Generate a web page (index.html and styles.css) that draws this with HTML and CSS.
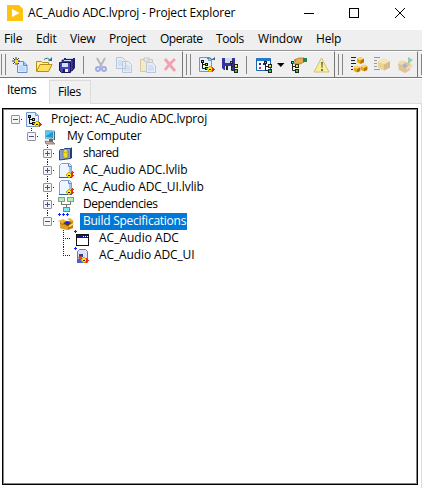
FILE: index.html
```html
<!DOCTYPE html>
<html lang="en">
<head>
<meta charset="utf-8">
<title>AC_Audio ADC.lvproj - Project Explorer</title>
<link rel="stylesheet" href="styles.css">
</head>
<body>
<svg class="defs" aria-hidden="true">
  <defs>
    <symbol id="branch" viewBox="0 0 8 12">
      <path d="M1.500 2V9.500H5M1.500 5.500H5" stroke="#222" fill="none"/>
      <path d="M0 0h3v3H0z" fill="#222"/><path d="M1 1h1v1H1z" fill="#2ee"/>
      <path d="M4 3h4v4H4zM4 8h4v4H4z" fill="#222"/>
      <path d="M5 4h2v2H5z" fill="#ee2"/><path d="M5 9h2v2H5z" fill="#3c4"/>
    </symbol>
    <symbol id="key" viewBox="0 0 8 8">
      <path d="M2 1h2v1h1v1h1v2H5v1H4v1H2V6H1V5H0V3h1V2h1z" fill="#c9a600"/>
      <path d="M2 2h2v1h1v2H4v1H2V5H1V3h1z" fill="#ffee00"/>
      <path d="M2 4h2v1H2z" fill="#222"/><path d="M5 2h1v1h1v1h1v1H7v1H6v1H5z" fill="#e52a18"/>
    </symbol>
    <symbol id="project" viewBox="0 0 16 16">
      <path d="M.5 .5h9l3 3v11h-12z" fill="#e3eeff" stroke="#7896c5"/>
      <path d="M9.500 .5v3h3" fill="#b8d0f2" stroke="#7896c5"/>
      <path d="M2 3h3v3H2zM6 6h3v3H6zM6 10h3v3H6z" fill="#111"/>
      <path d="M3.500 5v6.500H7M3.500 7.500H7" stroke="#111" fill="none"/>
      <path d="M3 4h1v1H3z" fill="#0ee"/><path d="M7 7h1v1H7z" fill="#ee0"/><path d="M7 11h1v1H7z" fill="#2d4"/>
      <use href="#key" x="8" y="8" width="8" height="8"/>
    </symbol>
    <symbol id="library" viewBox="0 0 16 16">
      <path d="M1.500 2.500l2-2h8l2 2v12h-12z" fill="#edf5ff" stroke="#7f9fd3"/>
      <path d="M1 14.500h13" stroke="#315b9e"/><path d="M11 3h2v11h-2z" fill="#a7c5ec"/><path d="M10.500 .5v3h3" fill="#c5daf4" stroke="#6288c5"/>
      <use href="#key" x="8" y="8" width="8" height="8"/><path d="M14 8h1v1h1v1h-1v1h-1v1h-1v-3h1z" fill="#e33122"/>
    </symbol>
    <symbol id="box" viewBox="0 0 8 8">
      <path d="M0 2l4-2 4 2v4L4 8 0 6z" fill="#e8a817"/><path d="M0 2l4-2 4 2-4 2z" fill="#ffd667"/>
      <path d="M4 4l4-2v4L4 8z" fill="#b77600"/>
    </symbol>
  </defs>
</svg>
<div class="window">
  <header class="titlebar">
    <svg class="logo" viewBox="0 0 16 16"><path d="M0 0h12l4 4v12H0z" fill="#ffc20e"/><path d="M5 4l7.500 4L5 12z" fill="#fff"/></svg>
    <span class="title">AC_Audio ADC.lvproj - Project Explorer</span>
    <svg class="controls" viewBox="0 0 102 12" shape-rendering="crispEdges">
      <path d="M0 6.500h10M45.500 1.500h9v9h-9z" stroke="#000" fill="none"/>
      <path d="M91 1l10 10M101 1L91 11" stroke="#000" shape-rendering="auto" fill="none"/>
    </svg>
  </header>
  <nav class="menu">
    <span class="m-file">File</span><span class="m-edit">Edit</span><span class="m-view">View</span><span class="m-project">Project</span><span class="m-operate">Operate</span><span class="m-tools">Tools</span><span class="m-window">Window</span><span class="m-help">Help</span>
  </nav>
  <div class="toolbar">
    <div class="group g-file">
      <i class="grip"></i>
      <svg class="ic" viewBox="0 0 16 16"><path d="M5.500 4.500h6l3.500 3.500v7.500H5.500z" fill="#d9e9ff" stroke="#6d8fc9"/><path d="M11.500 4.500v4H15" fill="#a9c7f1" stroke="#6d8fc9"/><path d="M7 9h4M7 11h6M7 13h6" stroke="#a9c7f1"/><path d="M4 0v8M0 4h8M1 1l6 6M7 1L1 7" stroke="#222" stroke-width=".9"/><path d="M3 3h3v3H3z" fill="#ffe800"/></svg>
      <svg class="ic open" viewBox="0 0 17 16"><path d="M.5 14V4.500h5l1 1h6V8" fill="#fff2a0" stroke="#b88d15"/><path d="M.5 14.500L4 7.500h12L12.500 14.500z" fill="#ffe05a" stroke="#b88d15"/><path d="M8 2.500q4-3 6 1" fill="none" stroke="#28738d"/><path d="M12 4h4V0z" fill="#28738d"/></svg>
      <svg class="ic save" viewBox="0 0 16 16"><path d="M5 1h11v10l-2 2H5z" fill="#242275"/><path d="M7 1h7v1H7z" fill="#cad8ff"/><path d="M3 3h11v10l-1 1H3z" fill="#4140a6" stroke="#171551" stroke-width=".8"/><path d="M5 3h7v1H5z" fill="#d3dcff"/><path d="M.5 5.500h11v10h-9l-2-2z" fill="#4742b5" stroke="#171551"/><path d="M3 6h6v4H3z" fill="#d3dcff"/><path d="M4 12h5v3H4z" fill="#eef"/><path d="M4 12h2v3H4z" fill="#222"/></svg>
      <i class="sep"></i>
      <svg class="ic cut faded" viewBox="0 0 12 16"><path d="M2 1l5 9M10 1L5 10" stroke="#666f7e" stroke-width="2"/><circle cx="3" cy="12" r="2" fill="none" stroke="#3456ce" stroke-width="2"/><circle cx="9" cy="12" r="2" fill="none" stroke="#3456ce" stroke-width="2"/></svg>
      <svg class="ic copy faded" viewBox="0 0 16 16"><path d="M.5 .5h6l3 3v8h-9zM6.500 4.500h6l3 3v8h-9z" fill="#deecff" stroke="#6b91d2"/><path d="M2 4h5M2 6h4M2 8h4M8 9h5M8 11h6M8 13h6" stroke="#86a7dc"/></svg>
      <svg class="ic paste faded" viewBox="0 0 16 16"><path d="M.5 2.500h12v12H.5z" fill="#ffe481" stroke="#b49139"/><path d="M4 1h5v3H4z" fill="#eee" stroke="#889"/><path d="M6.500 5.500h6l3 3v7h-9z" fill="#deecff" stroke="#6b91d2"/><path d="M8 9h5M8 11h6M8 13h6" stroke="#86a7dc"/></svg>
      <svg class="ic delete" viewBox="0 0 14 14"><path d="M2 1q5 6 10 12M12 1Q7 5 2 12" stroke="#f1a0ae" stroke-width="2.800" fill="none"/></svg>
    </div>
    <div class="group g-project">
      <i class="grip"></i>
      <svg class="ic p1" viewBox="0 0 16 16"><use href="#project" width="16" height="16"/><path d="M8 1.500q3-2 5 1" fill="none" stroke="#28738d"/><path d="M12 3h4V0z" fill="#28738d"/></svg>
      <svg class="ic p2" viewBox="0 0 16 16"><path d="M0 1h13v12H2l-2-2z" fill="#38339b"/><path d="M3 1h7v5H3z" fill="#cfdbf7"/><path d="M3 9h6v4H3z" fill="#eee"/><path d="M4 9h2v4H4z" fill="#222"/><use href="#branch" x="8" y="4" width="8" height="12"/></svg>
      <i class="sep"></i>
      <svg class="ic p3" viewBox="0 0 16 16"><path d="M.5 1.500h14v12H.5z" fill="#fff" stroke="#1764bd"/><path d="M1 1h13v3H1z" fill="#2478d0"/><path d="M3 6h2v2H3zM7 6h2v2H7z" fill="#238"/><path d="M3 10h2v2H3z" fill="#c33"/><use href="#branch" x="8" y="4" width="8" height="12"/></svg>
      <svg class="arrow" viewBox="0 0 8 4"><path d="M0 0h7.500L3.800 4z"/></svg>
      <svg class="ic p4" viewBox="0 0 16 16"><use href="#branch" x="0" y="4" width="8" height="12"/><path d="M3 3l5-2h5v4l-4 2-5 0-2-1 3-2z" fill="#e0b057" stroke="#a06c1c" stroke-width=".7"/><path d="M12 1h4v4h-4z" fill="#278447"/></svg>
      <svg class="ic p5 warning" viewBox="0 0 16 16"><path d="M7.500 1L15 15H0z" fill="#fff15a" stroke="#b6ac52"/><path d="M7 5h2l-.5 6H7.500zM7 12h2v2H7z" fill="#333"/></svg>
    </div>
    <div class="group g-build">
      <i class="grip"></i>
      <svg class="ic b1" viewBox="0 0 16 16"><path d="M0 .5h5M0 3.500h4M0 6.500h5M0 9.500h2M0 12.500h2" stroke="#222"/><use href="#box" x="6" y="0" width="7" height="7"/><use href="#box" x="2.500" y="8.500" width="7" height="7"/><use href="#box" x="9.500" y="7.500" width="7" height="7"/></svg>
      <svg class="ic b2 faded" viewBox="0 0 16 16"><path d="M0 .5h6M0 3.500h3M0 6.500h3M0 9.500h3M0 12.500h6" stroke="#222"/><use href="#box" x="4" y="1" width="12" height="13"/></svg>
      <svg class="ic b3 faded" viewBox="0 0 16 16"><path d="M1 7l6-3 7 3-1 6-5 3-6-3z" fill="#c98818"/><path d="M0 6l5-3 4 2-4 3zM9 10l5-3 2 2-6 4z" fill="#f1be56"/><path d="M5 8l3-1 3 2-3 2z" fill="#3c53d5"/><path d="M11 0l5 3-5 4z" fill="#22a539"/></svg>
    </div>
    <div class="group g-more"><i class="grip"></i></div>
  </div>
  <div class="tabs"><div class="tab active">Items</div><div class="tab">Files</div></div>
  <main class="panel">
    <div class="tree">
      <div class="row level-0"><i class="twist minus"></i><svg class="node" viewBox="0 0 16 16"><use href="#project" width="16" height="16"/></svg><span class="label l-project">Project: AC_Audio ADC.lvproj</span></div>
      <div class="row level-1"><i class="twist minus up"></i><svg class="node" viewBox="0 0 16 16"><path d="M3.500 1.500l9 .5v8.500l-9-1z" fill="#b3d2e3" stroke="#8fa5b5"/><path d="M4 2l7 1v6L4 8z" fill="#1e9bd8"/><path d="M4 2l6 1-6 4z" fill="#56cdf0"/><path d="M12 2l1 1v8h-1z" fill="#476579"/><path d="M7 10h4v3H7z" fill="#875c4c"/><path d="M3 12l8 1 2 2H4z" fill="#bbb" stroke="#735950" stroke-width=".7"/></svg><span class="label l-computer">My Computer</span></div>
      <div class="row level-2"><i class="twist plus full"></i><svg class="node" viewBox="0 0 16 16"><path d="M1.500 4.500l1-1h3l1-1h6v10l-11 1.500z" fill="#7f9fdc" stroke="#27457f"/><path d="M12 3l2-2v11l-2 1z" fill="#243e74"/><path d="M5 5v6c0 1.500 5 1.500 5 0V5z" fill="#f3db14" stroke="#817510" stroke-width=".7"/><ellipse cx="7.500" cy="5" rx="2.500" ry="1.200" fill="#fff47a" stroke="#817510" stroke-width=".6"/></svg><span class="label l-shared">shared</span></div>
      <div class="row level-2"><i class="twist plus full"></i><svg class="node" viewBox="0 0 16 16"><use href="#library" width="16" height="16"/></svg><span class="label l-lib">AC_Audio ADC.lvlib</span></div>
      <div class="row level-2"><i class="twist plus full"></i><svg class="node" viewBox="0 0 16 16"><use href="#library" width="16" height="16"/></svg><span class="label l-uilib">AC_Audio ADC_UI.lvlib</span></div>
      <div class="row level-2"><i class="twist plus full"></i><svg class="node" viewBox="0 0 16 16" shape-rendering="crispEdges"><path d="M3.500 4v3.500h9V4M8.500 8v3" stroke="#777" fill="none"/><path d="M.5 .5h6v4h-6zM9.500 .5h6v4h-6z" fill="#b6edb8" stroke="#8a9c8b"/><path d="M5.500 10.500h6v4h-6z" fill="#7eeaee" stroke="#5c8e91"/></svg><span class="label l-dependencies">Dependencies</span></div>
      <div class="row level-2 selected"><i class="twist minus up"></i><svg class="node" viewBox="0 0 16 16"><path d="M2 7h13v7l-5 2-8-2z" fill="#b97c0c"/><path d="M2 10l8 2v4l-8-2z" fill="#dea026"/><path d="M0 7l5-2 4 2-4 3zM9 5l3-1 4 3-2 1z" fill="#f0b535"/><path d="M10 12l5-3 1 1-4 3z" fill="#ffd67d"/><path d="M5 9l4-2 4 2-3 3z" fill="#5b3a05"/><path d="M8 8h1V7h1v1h1v1h-1v1H9V9H8z" fill="#1724ff"/><path d="M0 0h1v-1h1v1h1v1H2v1H1V1H0zM4 0h1v-1h1v1h1v1H6v1H5V1H4zM8 0h1v-1h1v1h1v1h-1v1H9V1H8z" fill="#1724ff"/></svg><span class="label l-build">Build Specifications</span></div>
      <div class="row level-3"><i class="twist full"></i><svg class="node" viewBox="0 0 16 16" shape-rendering="crispEdges"><path d="M2.500 3.500h12v11h-12z" fill="#fff" stroke="#111"/><path d="M3 4h11v3H3z" fill="#15158b"/><path d="M9 5h1v1H9zM11 5h1v1h-1zM13 5h1v1h-1z" fill="#fff"/><path d="M0 0h1v-1h1v1h1v1H2v1H1V1H0z" fill="#1724ff"/></svg><span class="label l-adc">AC_Audio ADC</span></div>
      <div class="row level-3"><i class="twist up"></i><svg class="node" viewBox="0 0 16 16"><path d="M3.500 3.500l2-2h6l2 2v11h-10z" fill="#dfe5f8" stroke="#6876b4"/><path d="M5 6h4v3H5z" fill="#2e3f9c"/><path d="M4 9l3-1 2 3-3 2z" fill="#d84d32"/><path d="M3 11h3l3 4H3z" fill="#4a60d0"/><use href="#key" x="7" y="8" width="8" height="8"/><path d="M0 0h1v-1h1v1h1v1H2v1H1V1H0z" fill="#1724ff"/></svg><span class="label l-adcui">AC_Audio ADC_UI</span></div>
    </div>
  </main>
</div>
</body>
</html>
```
FILE: styles.css
```css
* { box-sizing: border-box; }
body { margin: 0; background: #fff; color: #000; font: 12px/16px "Open Sans", "Noto Sans", sans-serif; }
.defs { display: none; }
.window { width: 422px; height: 488px; overflow: hidden; display: flex; flex-direction: column; white-space: nowrap; }
svg { display: block; flex: none; }

.titlebar { height: 30px; flex: none; display: flex; padding-left: 7px; }
.logo { width: 16px; height: 16px; margin-top: 5px; }
.title { width: 281px; padding: 5px 0 0 5px; letter-spacing: -.18px; }
.controls { width: 102px; height: 12px; margin-top: 7px; }

.menu { height: 20px; flex: none; display: flex; padding: 1px 0 0 4px; background: #efefef; letter-spacing: -.2px; }
.m-file { width: 32px; }
.m-edit { width: 34px; }
.m-view { width: 39px; }
.m-project { width: 51px; letter-spacing: -.3px; }
.m-operate { width: 56px; letter-spacing: -.5px; }
.m-tools { width: 42px; letter-spacing: -.4px; }
.m-window { width: 58px; }

.toolbar { height: 28px; flex: none; display: flex; background: #efefef; border-top: 1px solid #969696; }
.group { height: 27px; display: flex; align-items: center; flex: none; border-top: 1px solid #fff; border-right: 1px solid #777; border-bottom: 1px solid #777; }
.g-file { width: 183px; padding-left: 1px; }
.g-project { width: 152px; padding-left: 3px; }
.g-build { width: 83px; padding-left: 3px; }
.g-more { width: 4px; padding-left: 3px; border-right: 0; overflow: hidden; }
.grip { width: 5px; height: 21px; flex: none; border: solid #858585; border-width: 0 1px; }
.sep { width: 1px; height: 18px; background: #858585; margin: 0 9px 0 8px; flex: none; }
.ic { width: 16px; height: 16px; overflow: visible; }
.g-file .grip { margin-right: 6px; }
.open { width: 17px; margin-left: 8px; }
.save { margin-left: 6px; }
.cut { width: 12px; margin-left: 2px; }
.copy { margin-left: 9px; }
.paste { margin-left: 8px; }
.delete { width: 14px; height: 14px; margin-left: 7px; }
.faded { opacity: .42; }
.p1 { margin-left: 8px; }
.p2 { margin-left: 7px; }
.arrow { width: 8px; height: 4px; margin: 0 6px 0 5px; }
.p4 { margin-right: 7px; }
.warning { opacity: .65; }
.b1 { margin-left: 8px; }
.b2, .b3 { margin-left: 7px; }

.tabs { height: 26px; flex: none; display: flex; align-items: flex-start; background: #efefef; border-top: 1px solid #fff; border-bottom: 1px solid #dcdcdc; letter-spacing: -.4px; }
.tab { width: 41px; height: 24px; margin-top: 1px; padding: 3px 0 0 8px; background: #f1f1f1; border: solid #dcdcdc; border-width: 1px 1px 0 0; }
.tab.active { width: 50px; height: 25px; margin: 0 0 -1px; padding: 2px 0 0 7px; background: #fff; border-color: #fff #dcdcdc #fff #fff; position: relative; }

.panel { flex: 1; padding: 4px 3px 3px 2px; border-right: 1px solid #dcdcdc; }
.tree { height: 377px; width: 416px; border: 1px solid #000; box-shadow: inset 0 0 0 1px #85858b; padding: 2px 0 0 4px; }
.row { height: 17px; display: flex; align-items: center; }
.level-1 { padding-left: 16px; }
.level-2 { padding-left: 32px; }
.level-3 { padding-left: 48px; }
.twist { width: 19px; height: 17px; flex: none; display: grid; grid-template: 4px 9px 4px / 4px 9px 6px; --v: repeating-linear-gradient(#222 0 1px, transparent 1px 2px); --h: repeating-linear-gradient(90deg, #222 0 1px, transparent 1px 2px); background: var(--h) 8px 8px / 8px 1px no-repeat; }
.up { background: var(--h) 8px 8px / 8px 1px no-repeat, var(--v) 8px 0 / 1px 9px no-repeat; }
.full { background: var(--h) 8px 8px / 8px 1px no-repeat, var(--v) 8px 0 / 1px 17px no-repeat; }
.level-3 .twist { background-size: 7px 1px, 1px 17px; }
.level-3 .up { background-size: 7px 1px, 1px 9px; }
.minus::before, .plus::before { content: ""; grid-area: 2 / 2; border: 1px solid #929292; border-radius: 1px; background: linear-gradient(#3856a0, #3856a0) center / 5px 1px no-repeat, #f5f5f5; }
.plus::before { background: linear-gradient(#3856a0, #3856a0) center / 5px 1px no-repeat, linear-gradient(#3856a0, #3856a0) center / 1px 5px no-repeat, #f5f5f5; }
.node { width: 16px; height: 16px; margin-right: 6px; overflow: visible; }
.label { height: 17px; padding: 0 1px 0 3px; line-height: 16px; }
.selected .label { background: #0078d7; color: #fff; }
.l-project { letter-spacing: -.14px; }
.l-computer { letter-spacing: -.18px; }
.l-shared { letter-spacing: -.55px; }
.l-lib { letter-spacing: -.05px; }
.l-uilib { letter-spacing: -.1px; }
.l-dependencies { letter-spacing: -.42px; }
.l-build { letter-spacing: -.25px; }
.l-adcui { letter-spacing: -.12px; }
```
